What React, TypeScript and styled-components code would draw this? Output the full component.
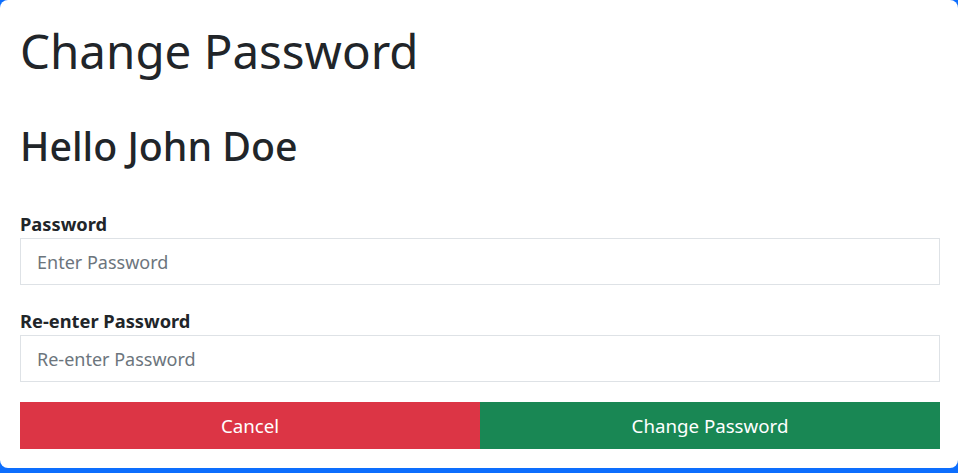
import React from "react";
import styled, { createGlobalStyle } from "styled-components";

const Global = createGlobalStyle`
  html, body { margin: 0; padding: 0; }
  body {
    background: #0d6efd;
    font-family: "Noto Sans", "Open Sans", sans-serif;
    color: #212529;
    width: 958px;
    height: 473px;
    overflow: hidden;
  }
  * { box-sizing: border-box; }
`;

const Card = styled.div`
  background: #ffffff;
  border-radius: 8px;
  height: 468px;
  padding: 21px 18px 0 20px;
  display: flex;
  flex-direction: column;
`;

const Title = styled.h1`
  margin: 0;
  font-size: 47.5px;
  font-weight: 400;
  line-height: 60px;
`;

const Greeting = styled.h3`
  margin: 42px 0 0;
  font-size: 39.3px;
  font-weight: 500;
  line-height: 47px;
`;

const Form = styled.form`
  margin-top: 42px;
  display: flex;
  flex-direction: column;
`;

const Field = styled.div<{ $last?: boolean }>`
  display: flex;
  flex-direction: column;
  margin-bottom: ${(p) => (p.$last ? "20px" : "24px")};
`;

const Label = styled.label`
  font-size: 18.3px;
  font-weight: 700;
  line-height: 24px;
  margin-bottom: 2px;
`;

const Input = styled.input`
  height: 47px;
  width: 100%;
  border: 1px solid #dee2e6;
  border-radius: 0;
  padding: 0 16px;
  font-family: inherit;
  font-size: 18px;
  color: #212529;
  background: #fff;
  outline: none;
  &::placeholder { color: #6c757d; opacity: 1; }
`;

const Buttons = styled.div`
  display: grid;
  grid-template-columns: 1fr 1fr;
`;

const Button = styled.button<{ $tone: "danger" | "success" }>`
  height: 47px;
  border: none;
  border-radius: 0;
  font-family: inherit;
  font-size: 18.7px;
  color: #fff;
  background: ${(p) => (p.$tone === "danger" ? "#dc3545" : "#198754")};
  cursor: pointer;
`;

export default function App() {
  return (
    <>
      <Global />
      <Card>
        <Title>Change Password</Title>
        <Greeting>Hello John Doe</Greeting>
        <Form onSubmit={(e) => e.preventDefault()}>
          <Field>
            <Label htmlFor="pw">Password</Label>
            <Input id="pw" type="password" placeholder="Enter Password" />
          </Field>
          <Field $last>
            <Label htmlFor="pw2">Re-enter Password</Label>
            <Input id="pw2" type="password" placeholder="Re-enter Password" />
          </Field>
          <Buttons>
            <Button type="button" $tone="danger">Cancel</Button>
            <Button type="submit" $tone="success">Change Password</Button>
          </Buttons>
        </Form>
      </Card>
    </>
  );
}
